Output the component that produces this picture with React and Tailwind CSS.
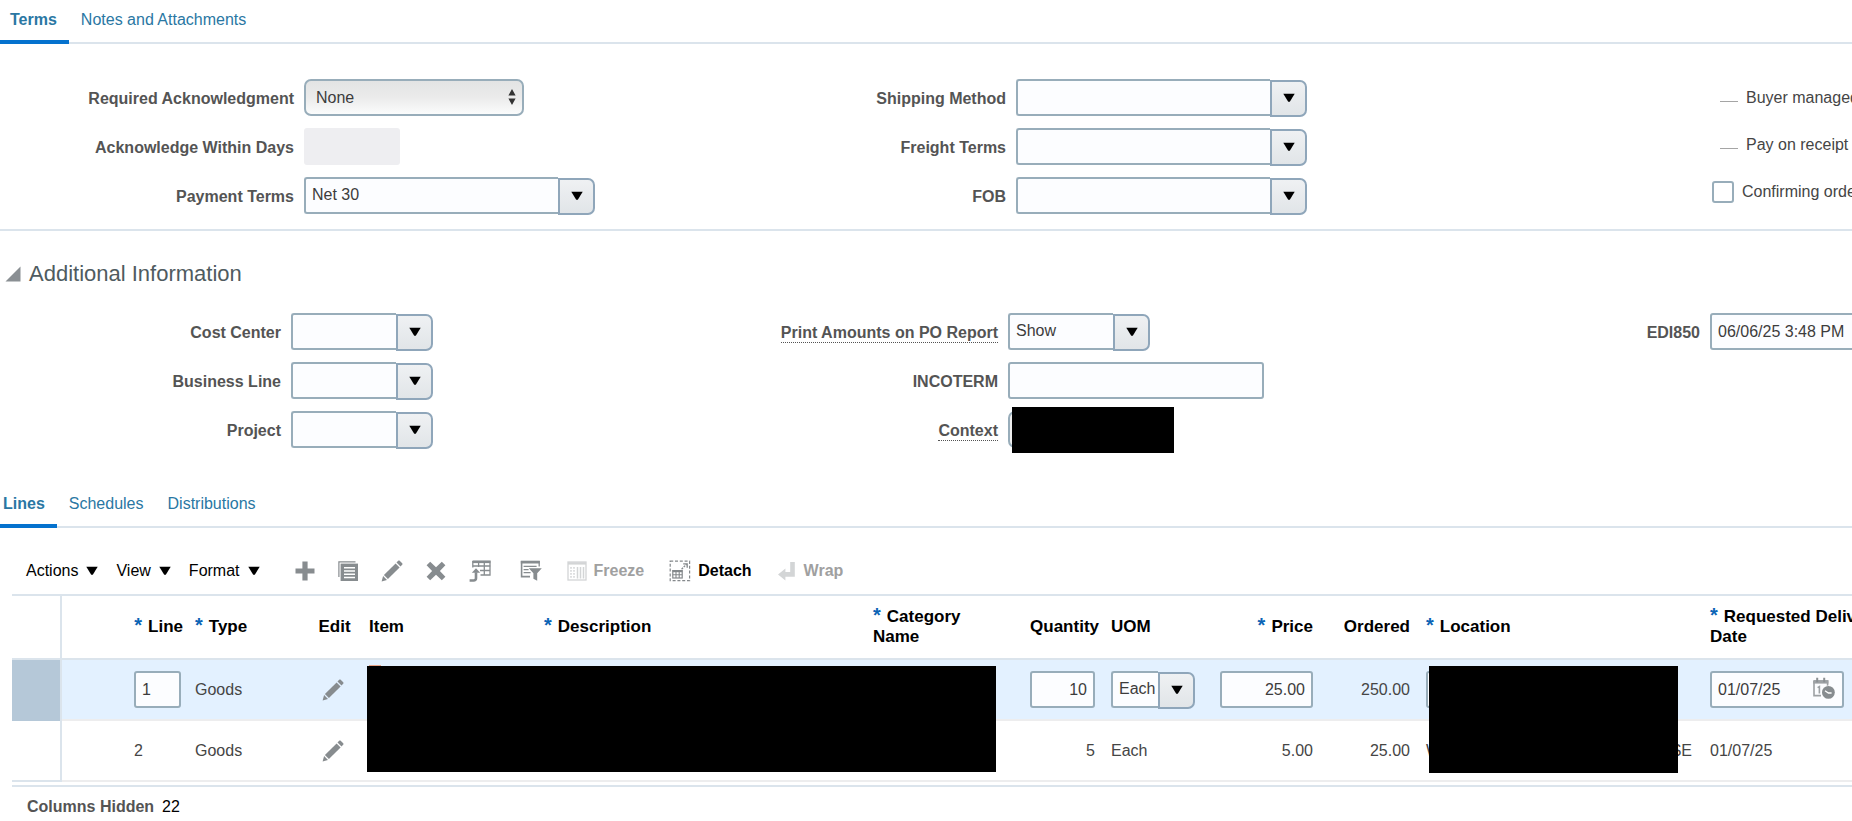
import React, { useState } from 'react';

const fieldBase = 'h-[37px] rounded-[3px] border-2 border-[#98adba] bg-[#fcfdff] pl-[6px] text-[#3c3c3c] outline-none focus:border-[#0572ce]';

const Caret = () => (
    <svg viewBox="0 0 12 10" className="h-[10px] w-3 shrink-0" fill="currentColor">
        <path d="M0.3 0.8h11.4L6.8 8.8H5.2z" />
    </svg>
);

const Label = ({ htmlFor, help, children }) => (
    <label htmlFor={htmlFor} className="shrink-0 text-right font-bold text-[#545454]">
        {help ? <span className="inline-block border-b border-dotted border-[#545454] leading-[19px]">{children}</span> : children}
    </label>
);

const FormRow = ({ id, label, help, labelWidth, children }) => (
    <div className="flex h-[37px] items-center gap-[10px]">
        <div className={`${labelWidth} shrink-0 pt-[3px] text-right`}>
            <Label htmlFor={id} help={help}>{label}</Label>
        </div>
        {children}
    </div>
);

const ComboBox = ({ id, value = '', width, label }) => {
    const [text, setText] = useState(value);
    return (
        <div className="flex">
            <input
                id={id}
                aria-label={label}
                value={text}
                onChange={e => setText(e.target.value)}
                className={`${fieldBase} ${width} rounded-r-none border-r-0`}
            />
            <button
                type="button"
                aria-label="Open list"
                className="mt-px flex h-[37px] w-[37px] items-center justify-center rounded-r-[7px] border-2 border-[#8fa6ba] bg-gradient-to-b from-[#eff1f3] to-[#e1e5e8] text-black"
            >
                <Caret />
            </button>
        </div>
    );
};

const TextField = ({ id, value = '', className = '', label }) => {
    const [text, setText] = useState(value);
    return (
        <input id={id} aria-label={label} value={text} onChange={e => setText(e.target.value)} className={`${fieldBase} pr-[6px] ${className}`} />
    );
};

const Tabs = ({ tabs, className = '', pad }) => {
    const [active, setActive] = useState(tabs[0]);
    return (
        <div role="tablist" className={`flex h-11 border-b-2 border-[#dbe4ec] ${className}`}>
            {tabs.map((tab, i) => (
                <button
                    key={tab}
                    type="button"
                    role="tab"
                    aria-selected={active === tab}
                    onClick={() => setActive(tab)}
                    className={`-mb-[2px] flex items-center border-b-4 text-[#2a77a3] ${i === 0 ? pad : 'px-3'} ${active === tab ? 'border-[#0572ce] font-bold' : 'border-transparent'}`}
                >
                    {tab}
                </button>
            ))}
        </div>
    );
};

const Pencil = () => (
    <svg viewBox="0 0 22 22" className="h-[22px] w-[22px]" fill="#878c8f">
        <path d="M0.6 21.4l1.5-5.4 3.9 4z" />
        <path d="M2.9 14.9L14.6 3.4l4 4L6.9 19.1z" />
        <path d="M15.5 2.5l1.7-1.7c.5-.5 1-.5 1.5 0l2.5 2.5c.5.5.5 1 0 1.5l-1.7 1.7z" />
    </svg>
);

const PlusIcon = () => (
    <svg viewBox="0 0 20 20" className="h-5 w-5" fill="#878c8f">
        <path d="M7.4 0.5h5.2v6.9h6.9v5.2h-6.9v6.9H7.4v-6.9H0.5V7.4h6.9z" />
    </svg>
);

const CopyIcon = () => (
    <svg viewBox="0 0 20 20" className="h-5 w-5">
        <path d="M0.9 16V0.9h16.6" fill="none" stroke="#878c8f" strokeWidth="1.2" />
        <path d="M2.6 2.6H20V20H2.6z" fill="#878c8f" />
        <path d="M6 6.8h11M6 10h11M6 13.2h11M6 16.4h11" stroke="#ffffff" strokeWidth="1.5" />
    </svg>
);

const DeleteIcon = () => (
    <svg viewBox="0 0 20 20" className="h-5 w-5" fill="#878c8f">
        <path d="M4.2 0.8L10 6.2l5.8-5.4 3.6 3.5L13.9 10l5.5 5.7-3.6 3.5L10 13.8l-5.8 5.4-3.6-3.5L6.1 10 0.6 4.3z" />
    </svg>
);

const ExportIcon = () => (
    <svg viewBox="0 0 22 22" className="h-[22px] w-[22px]" fill="none" stroke="#878c8f">
        <path d="M3.6 1.2H21V15H11.5" strokeWidth="1.3" />
        <path d="M3.6 2h17.8" strokeWidth="2.2" />
        <path d="M3.8 1v6.5M9.6 1v6M15.3 1v14M3.6 6h17.6M11 10.5h10" strokeWidth="1.3" />
        <path d="M0.6 20.5h4c1.6 0 2.4-.8 2.4-2.3v-6" strokeWidth="2.6" />
        <path d="M2.8 12.8L7 8.2l4.2 4.6z" fill="#878c8f" stroke="none" />
    </svg>
);

const FilterIcon = () => (
    <svg viewBox="0 0 22 22" className="h-[22px] w-[22px]" fill="none" stroke="#878c8f">
        <path d="M0.8 2.1h19" strokeWidth="2.8" />
        <path d="M19.2 1v5.6" strokeWidth="1.3" />
        <path d="M1.6 1v15.6h8.4" strokeWidth="1.6" />
        <path d="M3.6 6.4h13M3.6 9.6h5M3.6 12.6h7" strokeWidth="1.4" />
        <path d="M8.8 8.2h13l-4.6 5v7.6l-3.8-2v-5.6z" fill="#878c8f" stroke="none" />
    </svg>
);

const FreezeIcon = () => (
    <svg viewBox="0 0 20 20" className="h-5 w-5" fill="none" stroke="#d3d5d6">
        <rect x="1" y="1" width="18" height="18" strokeWidth="1.3" />
        <path d="M1 2.4h18" strokeWidth="2.4" />
        <path d="M4 6v11.4M7 6v11.4" strokeWidth="1.5" strokeDasharray="1.8 1.2" />
        <path d="M10.5 6v11.4M13.5 6v11.4M16.5 6v11.4" strokeWidth="1.5" />
    </svg>
);

const DetachIcon = () => (
    <svg viewBox="0 0 22 22" className="h-[22px] w-[22px]" fill="none" stroke="#85898c">
        <rect x="1.2" y="1.2" width="19.4" height="19.4" strokeWidth="1.2" strokeDasharray="3 1.8" />
        <rect x="3.8" y="10.6" width="9.4" height="7.4" strokeWidth="1.2" />
        <path d="M3.6 11.2h9.8" strokeWidth="2" />
        <path d="M3.8 14.8h9.4M7 11v7M10.2 11v7" strokeWidth="1.1" />
        <path d="M12.6 9.2l5-5" strokeWidth="1.3" strokeDasharray="2 1" />
        <path d="M14.2 3.8h4v4" strokeWidth="1.3" />
    </svg>
);

const WrapIcon = () => (
    <svg viewBox="0 0 20 20" className="h-5 w-5" fill="#d3d5d6">
        <path d="M1 13.4l7.4-6v3.6h4.8V1h4.6v14.8H8.4v3.6z" />
    </svg>
);

const CalendarClock = () => (
    <svg viewBox="0 0 24 24" className="h-6 w-6">
        <path d="M2 4h13.6v5M2 4v14.6h7" fill="none" stroke="#9da1a4" strokeWidth="1.6" />
        <path d="M1.2 3.2h15.2v3.4H1.2z" fill="#9da1a4" />
        <path d="M5.2 0.8v4.4M12.2 0.8v4.4" stroke="#8b9093" strokeWidth="2" />
        <path d="M5.6 10.6l1.8-1v6.8" fill="none" stroke="#9da1a4" strokeWidth="1.6" />
        <circle cx="16.4" cy="15.4" r="7" fill="#ffffff" />
        <circle cx="16.4" cy="15.4" r="6.4" fill="#878c8f" />
        <path d="M13 13.8l3.4 2.2h3.2" fill="none" stroke="#ffffff" strokeWidth="1.3" />
    </svg>
);

const MenuButton = ({ children }) => (
    <button type="button" className="flex items-center gap-2 text-black">
        {children} <Caret />
    </button>
);

const Required = ({ children }) => (
    <>
        <span className="text-[20px] leading-0 text-[#0b64b5]">*</span>
        <span className="pl-[6px]">{children}</span>
    </>
);

const TermsSection = () => (
    <section className="grid grid-cols-[minmax(0,712fr)_minmax(0,694fr)_minmax(0,446fr)] border-b-2 border-[#dbe4ec] pt-[35px] pb-[15px]">
        <div className="flex flex-col gap-3">
            <FormRow id="req-ack" label="Required Acknowledgment" labelWidth="w-[294px]">
                <div className="relative">
                    <select
                        id="req-ack"
                        className="h-[37px] w-[220px] appearance-none rounded-[7px] border-2 border-[#98adba] bg-gradient-to-b from-[#e3e4e4] via-[#ebebeb] to-[#fbfcfc] px-[10px] text-[#3c3c3c]"
                    >
                        <option>None</option>
                    </select>
                    <svg viewBox="0 0 8 16" className="pointer-events-none absolute top-[10px] right-[8px] h-4 w-2" fill="#333333">
                        <path d="M4 0l3.6 6.6H.4zM4 16L.4 9.4h7.2z" />
                    </svg>
                </div>
            </FormRow>
            <FormRow id="ack-days" label="Acknowledge Within Days" labelWidth="w-[294px]">
                <input id="ack-days" disabled className="h-[37px] w-24 rounded-[3px] bg-[#eeeef1]" />
            </FormRow>
            <FormRow id="pay-terms" label="Payment Terms" labelWidth="w-[294px]">
                <ComboBox id="pay-terms" value="Net 30" width="w-[254px]" />
            </FormRow>
        </div>
        <div className="flex flex-col gap-3">
            <FormRow id="ship-method" label="Shipping Method" labelWidth="w-[294px]">
                <ComboBox id="ship-method" width="w-[254px]" />
            </FormRow>
            <FormRow id="freight" label="Freight Terms" labelWidth="w-[294px]">
                <ComboBox id="freight" width="w-[254px]" />
            </FormRow>
            <FormRow id="fob" label="FOB" labelWidth="w-[294px]">
                <ComboBox id="fob" width="w-[254px]" />
            </FormRow>
        </div>
        <div className="flex flex-col gap-[10px] pl-[306px] whitespace-nowrap text-[#454545]">
            <div className="flex h-[37px] items-center gap-2 pl-2">
                <span className="mt-2 w-[18px] shrink-0 border-b border-[#a5a5a5]" />
                <span>Buyer managed transportation</span>
            </div>
            <div className="flex h-[37px] items-center gap-2 pl-2">
                <span className="mt-2 w-[18px] shrink-0 border-b border-[#a5a5a5]" />
                <span>Pay on receipt</span>
            </div>
            <label className="flex h-[37px] items-center gap-2">
                <input type="checkbox" className="h-[22px] w-[22px] shrink-0 appearance-none rounded-[3px] border-2 border-[#98adba] bg-white checked:bg-[#0572ce]" />
                Confirming order
            </label>
        </div>
    </section>
);

const AdditionalInfo = () => (
    <section>
        <h2 className="flex items-center gap-2 px-[5px] pt-7 pb-6 text-[22px] leading-[30px] text-[#4f5b60]">
            <svg viewBox="0 0 16 16" className="h-4 w-4" fill="#8a8f93">
                <path d="M15.5 0.5v15H0.5z" />
            </svg>
            Additional Information
        </h2>
        <div className="grid grid-cols-[minmax(0,717fr)_minmax(0,702fr)_minmax(0,433fr)]">
            <div className="flex flex-col gap-3">
                <FormRow id="cost-center" label="Cost Center" labelWidth="w-[281px]">
                    <ComboBox id="cost-center" width="w-[105px]" />
                </FormRow>
                <FormRow id="biz-line" label="Business Line" labelWidth="w-[281px]">
                    <ComboBox id="biz-line" width="w-[105px]" />
                </FormRow>
                <FormRow id="project" label="Project" labelWidth="w-[281px]">
                    <ComboBox id="project" width="w-[105px]" />
                </FormRow>
            </div>
            <div className="flex flex-col gap-3">
                <FormRow id="print-amounts" label="Print Amounts on PO Report" help labelWidth="w-[281px]">
                    <ComboBox id="print-amounts" value="Show" width="w-[105px]" />
                </FormRow>
                <FormRow id="incoterm" label="INCOTERM" labelWidth="w-[281px]">
                    <TextField id="incoterm" className="w-[256px]" />
                </FormRow>
                <FormRow id="context" label="Context" help labelWidth="w-[281px]">
                    <div className="relative">
                        <select id="context" className="block h-[37px] w-40 appearance-none rounded-[7px] border-2 border-[#98adba] bg-[#eeeeee]" />
                        <div className="absolute -top-1 left-1 h-[46px] w-[162px] bg-black" />
                    </div>
                </FormRow>
            </div>
            <div>
                <FormRow id="edi850" label="EDI850" labelWidth="w-[281px]">
                    <TextField id="edi850" value="06/06/25 3:48 PM" className="w-[200px] shrink-0" />
                </FormRow>
            </div>
        </div>
    </section>
);

const Toolbar = () => (
    <div className="flex h-[46px] items-center pl-[26px] whitespace-nowrap">
        <div className="flex gap-[18px]">
            <MenuButton>Actions</MenuButton>
            <MenuButton>View</MenuButton>
            <MenuButton>Format</MenuButton>
        </div>
        <div className="flex items-center gap-[23px] pl-[35px]">
            <button type="button" aria-label="Add row"><PlusIcon /></button>
            <button type="button" aria-label="Duplicate"><CopyIcon /></button>
            <button type="button" aria-label="Edit"><Pencil /></button>
            <button type="button" aria-label="Delete"><DeleteIcon /></button>
            <button type="button" aria-label="Export to Excel"><ExportIcon /></button>
        </div>
        <div className="flex items-center gap-[25px] pl-[29px] font-bold">
            <button type="button" aria-label="Query by example"><FilterIcon /></button>
            <button type="button" disabled className="flex items-center gap-[7px] text-[#a0a0a0]"><FreezeIcon /> Freeze</button>
            <button type="button" className="flex items-center gap-[7px] text-black"><DetachIcon /> Detach</button>
            <button type="button" disabled className="flex items-center gap-[7px] text-[#a0a0a0]"><WrapIcon /> Wrap</button>
        </div>
    </div>
);

const th = 'px-2';
const td = 'px-2 border-b-2 border-[#ededee]';

const LinesTable = () => (
    <div className="border-y-2 border-[#dbe4ec] pb-[3px]">
        <table className="w-[calc(100%+60px)] table-fixed border-separate border-spacing-0 text-[#454545]">
            <colgroup>
                <col className="w-[50px]" />
                <col className="w-[64px]" />
                <col className="w-[61px]" />
                <col className="w-[121px]" />
                <col className="w-[53px]" />
                <col className="w-[175px]" />
                <col className="w-[329px]" />
                <col className="w-[157px]" />
                <col className="w-[81px]" />
                <col className="w-[109px]" />
                <col className="w-[109px]" />
                <col className="w-[97px]" />
                <col className="w-[284px]" />
                <col />
            </colgroup>
            <thead>
                <tr className="h-16 text-left text-[17px] leading-5 text-black [&>th]:border-b-2 [&>th]:border-[#dbe4ec]">
                    <th className="border-r-2" />
                    <th />
                    <th className="pr-1 text-right whitespace-nowrap"><Required>Line</Required></th>
                    <th className={th}><Required>Type</Required></th>
                    <th className="text-center">Edit</th>
                    <th className={th}>Item</th>
                    <th className={th}><Required>Description</Required></th>
                    <th className={th}><Required>Category</Required><br />Name</th>
                    <th className="pr-1 text-right">Quantity</th>
                    <th className={th}>UOM</th>
                    <th className={`${th} text-right`}><Required>Price</Required></th>
                    <th className={`${th} text-right`}>Ordered</th>
                    <th className={th}><Required>Location</Required></th>
                    <th className={th}><Required>Requested Delivery</Required><br />Date</th>
                </tr>
            </thead>
            <tbody>
                <tr className="h-[61px] bg-[#e3f1ff]">
                    <td className="border-r-2 border-[#dbe4ec] bg-[#b5c8d8]" />
                    <td className={td} />
                    <td className={td}><TextField label="Line" value="1" className="w-[47px]" /></td>
                    <td className={td}>Goods</td>
                    <td className="border-b-2 border-[#ededee] pl-[14px]">
                        <button type="button" aria-label="Edit line 1" className="block"><Pencil /></button>
                    </td>
                    <td className={`${td} relative`}>
                        <span className="absolute top-[5px] left-2 h-1 w-3 bg-[#e9a486]" />
                        <div className="absolute top-[6px] left-[6px] z-10 h-[106px] w-[629px] bg-black" />
                    </td>
                    <td className={td} />
                    <td className={td} />
                    <td className={td}><TextField label="Quantity" value="10" className="w-full text-right" /></td>
                    <td className={td}><ComboBox label="UOM" value="Each" width="w-[47px]" /></td>
                    <td className={td}><TextField label="Price" value="25.00" className="w-full text-right" /></td>
                    <td className={`${td} text-right`}>250.00</td>
                    <td className={`${td} relative`}>
                        <TextField label="Location" className="w-[240px]" />
                        <div className="absolute top-[6px] left-[11px] z-10 h-[107px] w-[249px] bg-black" />
                    </td>
                    <td className={td}>
                        <div className="relative w-[134px]">
                            <TextField label="Requested Delivery Date" value="01/07/25" className="w-full" />
                            <button type="button" aria-label="Select date and time" className="absolute top-[6px] right-[8px]"><CalendarClock /></button>
                        </div>
                    </td>
                </tr>
                <tr className="h-[61px]">
                    <td className="border-r-2 border-b-2 border-[#dbe4ec]" />
                    <td className={td} />
                    <td className={td}>2</td>
                    <td className={td}>Goods</td>
                    <td className="border-b-2 border-[#ededee] pl-[14px]">
                        <button type="button" aria-label="Edit line 2" className="block"><Pencil /></button>
                    </td>
                    <td className={td} />
                    <td className={td} />
                    <td className={td} />
                    <td className={`${td} text-right`}>5</td>
                    <td className={td}>Each</td>
                    <td className={`${td} text-right`}>5.00</td>
                    <td className={`${td} text-right`}>25.00</td>
                    <td className={td}>
                        <div className="flex w-[266px] justify-between"><span>W</span><span>SE</span></div>
                    </td>
                    <td className={td}>01/07/25</td>
                </tr>
            </tbody>
        </table>
    </div>
);

const App = () => {
    return (
        <div className="min-h-screen overflow-hidden bg-white font-['Liberation_Sans',Arial,sans-serif] text-[16px] leading-5">
            <Tabs tabs={['Terms', 'Notes and Attachments']} pad="pr-3 pl-[10px]" />
            <TermsSection />
            <AdditionalInfo />
            <Tabs tabs={['Lines', 'Schedules', 'Distributions']} className="mt-9" pad="pr-3 pl-[3px]" />

            {/* Lines grid */}
            <div className="pt-5">
                <Toolbar />
                <div className="pl-3">
                    <LinesTable />
                </div>
                <div className="flex gap-2 pt-[10px] pb-[5px] pl-[27px]">
                    <span className="font-bold text-[#545454]">Columns Hidden</span>
                    <span className="text-black">22</span>
                </div>
            </div>
        </div>
    );
};

export default App;
